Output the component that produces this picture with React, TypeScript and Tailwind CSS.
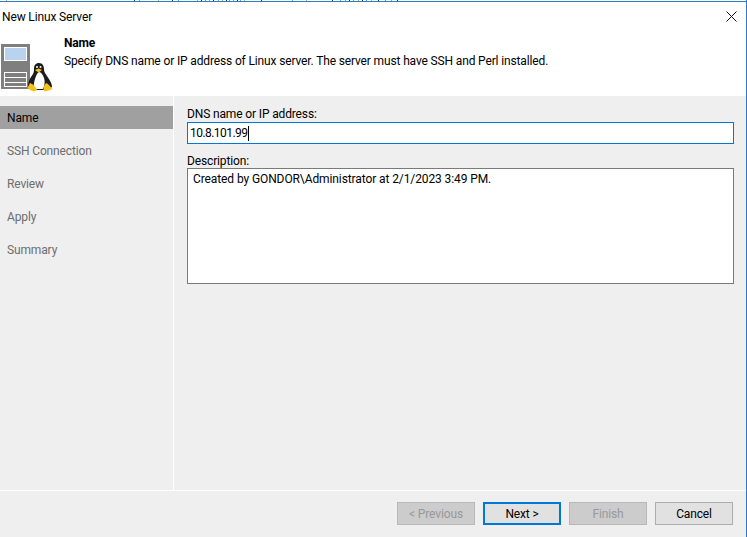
const font = { fontFamily: 'Roboto, "Open Sans", sans-serif', letterSpacing: "-0.14px" };

const steps = ["Name", "SSH Connection", "Review", "Apply", "Summary"];

// bits of the window behind, showing along the top edge
const specks = [6, 134, 139, 158, 172, 178, 197, 201, 205, 209, 213, 218, 222, 226, 229, 233, 237, 240, 244, 261, 292, 306, 332, 340, 345, 349, 353, 358, 362, 366, 371, 378, 385, 391, 397];

function ServerIcon() {
  return (
    <svg width="54" height="50" viewBox="0 0 54 50" className="shrink-0">
      {/* server */}
      <rect x="1" y="2" width="29" height="45" fill="#7f7f7f" />
      <rect x="4.5" y="5.5" width="22" height="13" fill="#b9d3ee" stroke="#fff" />
      <rect x="4.5" y="30.5" width="22" height="14" fill="#7f7f7f" stroke="#fff" />
      <path d="M4.5 35.5h22M4.5 40.5h22" stroke="#fff" />
      {/* penguin */}
      <path d="M39 21c-3.500 0-5 2.500-5 6 0 4-1 5-3 8s-3 6-3 9l3 4h17l4-3c0-4-3-8-5-11-2-3-3-4-3-7 0-3-1.500-6-5-6z" fill="#1c1c1c" />
      <path d="M35 37c1-3 2-6 4-7 2 0 4 3 5 6 1 3 1 7-1 11h-8c-2-3-1-7 0-10z" fill="#fff" />
      <circle cx="37" cy="25" r="1" fill="#fff" />
      <circle cx="40.500" cy="25" r="1" fill="#fff" />
      <path d="M35 28l3.500-1.500 3.500 1.500-3.500 2.500z" fill="#f2c21a" />
      <path d="M27.500 46l2.500-5 3 1.500 3 3.500 1 2-3 1.500-3-1z" fill="#f2c21a" />
      <path d="M44 44l2-3 2 1 4.500 5-4 1.500-4 1-1-2z" fill="#f2c21a" />
    </svg>
  );
}

export default function App() {
  return (
    <div style={font} className="w-[747px] h-[537px] flex flex-col overflow-hidden bg-white text-[12px] text-black border-r border-r-[#2b7cc4]">
      {/* top edge of the window */}
      <div className="h-[2px] shrink-0 border-b border-b-[#2b7cc4] flex items-start">
        <svg width="420" height="1" viewBox="0 0 420 1">
          {specks.map((x, i) => (
            <rect key={x} x={x} y="0" width="1" height="1" fill={i % 3 === 0 ? "#e0a050" : i % 3 === 1 ? "#333" : "#5aa0d8"} />
          ))}
        </svg>
      </div>

      {/* title bar */}
      <div className="h-[28px] shrink-0 flex items-center justify-between pl-[2px] pr-[9px]">
        <span className="leading-none mt-[2px]">New Linux Server</span>
        <svg width="11" height="11" viewBox="0 0 11 11">
          <path d="M.5.5l10 10M10.500.5l-10 10" stroke="#111" strokeWidth="1" fill="none" />
        </svg>
      </div>

      {/* header */}
      <div className="h-[66px] shrink-0 flex items-start">
        <div className="w-[64px] shrink-0 pt-[12px]">
          <ServerIcon />
        </div>
        <div className="pt-[5px]">
          <div className="font-bold leading-[17px]">Name</div>
          <div className="leading-[17px] mt-[1px]">Specify DNS name or IP address of Linux server. The server must have SSH and Perl installed.</div>
        </div>
      </div>

      {/* body */}
      <div className="flex-1 flex min-h-0 bg-[#efefef]">
        <div className="w-[173px] shrink-0 pt-[10px]">
          {steps.map((s, i) => (
            <div
              key={s}
              className={
                i === 0
                  ? "h-[23px] mb-[10px] pl-[7px] flex items-center bg-[#a0a0a0] text-black"
                  : "h-[23px] mb-[10px] pl-[7px] flex items-center text-[#6d6d6d]"
              }
            >
              {s}
            </div>
          ))}
        </div>
        <div className="w-[1px] shrink-0 bg-white" />
        <div className="flex-1 pl-[13px] pr-[12px] pt-[10px]">
          <div className="leading-[16px]">DNS name or IP address:</div>
          <div className="h-[22px] border border-[#0078d7] bg-white flex items-center pl-[2px] leading-none tracking-[-0.55px]">
            10.8.101.99
            <span className="w-[1px] h-[15px] bg-black ml-[1px]" />
          </div>
          <div className="leading-[16px] mt-[8px] pt-[1px] h-[16px]">Description:</div>
          <div className="h-[116px] border border-[#7a7a7a] bg-white pl-[5px] pt-[2px] leading-[17px] tracking-[-0.1px]">
            Created by GONDOR\Administrator at 2/1/2023 3:49 PM.
          </div>
        </div>
      </div>

      {/* footer */}
      <div className="h-[47px] shrink-0 bg-[#efefef] border-t border-t-white flex items-start justify-end gap-[8px] pt-[11px] pr-[13px]">
        <button className="w-[78px] h-[23px] border border-[#b8b8b8] bg-[#cccccc] text-[#999999]">&lt; Previous</button>
        <button className="w-[78px] h-[23px] border-2 border-[#0078d7] bg-[#e1e1e1]">Next &gt;</button>
        <button className="w-[78px] h-[23px] border border-[#b8b8b8] bg-[#cccccc] text-[#999999]">Finish</button>
        <button className="w-[78px] h-[23px] border border-[#adadad] bg-[#e1e1e1]">Cancel</button>
      </div>
    </div>
  );
}
